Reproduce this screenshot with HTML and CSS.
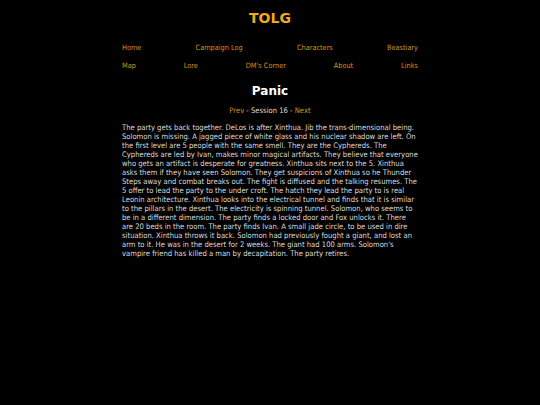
FILE: index.html
```html
<!DOCTYPE html>
<html>
<head>
<meta charset="utf-8">
<link rel="stylesheet" href="styles.css">
</head>
<body>
<div class="page">
  <h1 class="site-title">TOLG</h1>
  <nav class="nav">
    <div class="nav-row">
      <a href="#">Home</a>
      <a href="#">Campaign Log</a>
      <a href="#">Characters</a>
      <a href="#">Beastiary</a>
    </div>
    <div class="nav-row">
      <a href="#">Map</a>
      <a href="#">Lore</a>
      <a href="#">DM's Corner</a>
      <a href="#">About</a>
      <a href="#">Links</a>
    </div>
  </nav>
  <h2 class="page-title">Panic</h2>
  <div class="pager"><a href="#">Prev</a> - Session 16 - <a href="#">Next</a></div>
  <p class="story">The party gets back together. DeLos is after Xinthua. Jib the trans-dimensional being. Solomon is missing. A jagged piece of white glass and his nuclear shadow are left. On the first level are 5 people with the same smell. They are the Cyphereds. The Cyphereds are led by Ivan, makes minor magical artifacts. They believe that everyone who gets an artifact is desperate for greatness. Xinthua sits next to the 5. Xinthua asks them if they have seen Solomon. They get suspicions of Xinthua so he Thunder Steps away and combat breaks out. The fight is diffused and the talking resumes. The 5 offer to lead the party to the under croft. The hatch they lead the party to is real Leonin architecture. Xinthua looks into the electrical tunnel and finds that it is similar to the pillars in the desert. The electricity is spinning tunnel. Solomon, who seems to be in a different dimension. The party finds a locked door and Fox unlocks it. There are 20 beds in the room. The party finds Ivan. A small jade circle, to be used in dire situation. Xinthua throws it back. Solomon had previously fought a giant, and lost an arm to it. He was in the desert for 2 weeks. The giant had 100 arms. Solomon's vampire friend has killed a man by decapitation. The party retires.</p>
</div>
</body>
</html>
```
FILE: styles.css
```css
html, body {
  margin: 0;
  padding: 0;
  background: #000;
}
body {
  font-family: "DejaVu Sans Condensed", "DejaVu Sans", sans-serif;
  font-size: 7.6px;
  color: #dcdcdc;
}
.page {
  width: 296px;
  margin: 0 auto;
  padding-top: 10px;
}
.site-title {
  margin: 0;
  text-align: center;
  font-family: "DejaVu Sans", sans-serif;
  font-size: 14px;
  line-height: 17px;
  font-weight: bold;
  color: #f0a81c;
}
.nav {
  margin-top: 16px;
  display: flex;
  flex-direction: column;
  gap: 8px;
  font-size: 7.3px;
}
.nav-row {
  display: flex;
  justify-content: space-between;
  line-height: 10px;
}
.nav a, .pager a {
  color: #d0941c;
  text-decoration: none;
}
.page-title {
  margin: 13px 0 0;
  text-align: center;
  font-family: "DejaVu Sans", sans-serif;
  font-size: 12px;
  line-height: 14px;
  font-weight: bold;
  color: #fff;
}
.pager {
  margin-top: 8px;
  text-align: center;
  line-height: 10px;
}
.story {
  margin: 7px 0 0;
  line-height: 9px;
}
```
